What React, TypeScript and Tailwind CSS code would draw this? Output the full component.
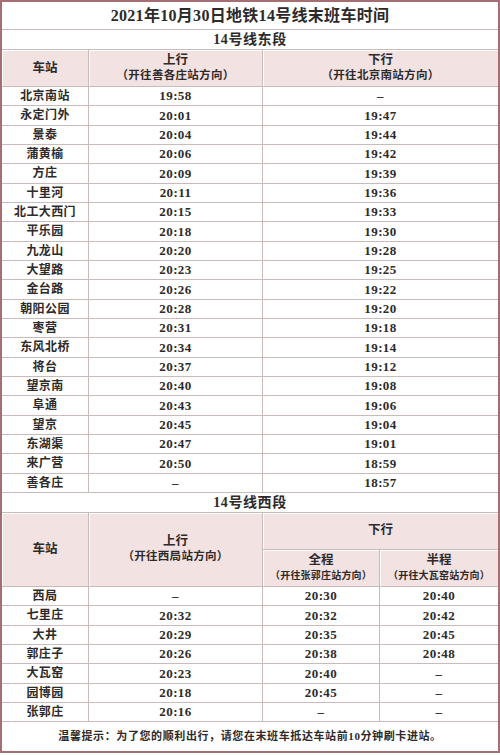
import React from "react";

const FONT = {
    fontFamily: '"Liberation Serif", "Noto Sans CJK SC", serif',
};

const EAST: [string, string, string][] = [
    ["北京南站", "19:58", "–"],
    ["永定门外", "20:01", "19:47"],
    ["景泰", "20:04", "19:44"],
    ["蒲黄榆", "20:06", "19:42"],
    ["方庄", "20:09", "19:39"],
    ["十里河", "20:11", "19:36"],
    ["北工大西门", "20:15", "19:33"],
    ["平乐园", "20:18", "19:30"],
    ["九龙山", "20:20", "19:28"],
    ["大望路", "20:23", "19:25"],
    ["金台路", "20:26", "19:22"],
    ["朝阳公园", "20:28", "19:20"],
    ["枣营", "20:31", "19:18"],
    ["东风北桥", "20:34", "19:14"],
    ["将台", "20:37", "19:12"],
    ["望京南", "20:40", "19:08"],
    ["阜通", "20:43", "19:06"],
    ["望京", "20:45", "19:04"],
    ["东湖渠", "20:47", "19:01"],
    ["来广营", "20:50", "18:59"],
    ["善各庄", "–", "18:57"],
];

const WEST: [string, string, string, string][] = [
    ["西局", "–", "20:30", "20:40"],
    ["七里庄", "20:32", "20:32", "20:42"],
    ["大井", "20:29", "20:35", "20:45"],
    ["郭庄子", "20:26", "20:38", "20:48"],
    ["大瓦窑", "20:23", "20:40", "–"],
    ["园博园", "20:18", "20:45", "–"],
    ["张郭庄", "20:16", "–", "–"],
];

const cell = "flex items-center justify-center border-r border-[#cbbaba]";
const time = "text-[13px] tracking-[0.4px]";
const head = "flex flex-col items-center justify-center bg-[#f3e2e2] shadow-[inset_1px_1px_0_#fff] leading-[15px]";

function Sub({ title, dir, small }: { title: string; dir: string; small?: boolean }) {
    return (
        <>
            <span className="text-[12.5px]">{title}</span>
            <span className={small ? "text-[10px] whitespace-nowrap tracking-[0.2px]" : "text-[11.5px] whitespace-nowrap tracking-[0.3px]"}>
                （{dir}）
            </span>
        </>
    );
}

export default function App() {
    return (
        <div className="w-[500px] h-[755px] bg-white text-[#2e2a2a] font-bold" style={FONT}>
            <div className="w-[500px] h-[753px] border-2 border-[#a66e70] flex flex-col">
                {/* Title */}
                <div className="h-[28px] border-b border-[#cbbaba] flex items-center justify-center text-[16px] tracking-[0.3px]">
                    2021年10月30日地铁14号线末班车时间
                </div>
                <div className="h-[20px] border-b border-[#cbbaba] flex items-center justify-center text-[14px] tracking-[0.6px]">
                    14号线东段
                </div>

                {/* East header */}
                <div className="h-[37px] border-b border-[#cbbaba] flex">
                    <div className={`${head} w-[87px] border-r border-[#cbbaba] text-[12.5px]`}>车站</div>
                    <div className={`${head} w-[174px] border-r border-[#cbbaba]`}>
                        <Sub title="上行" dir="开往善各庄站方向" />
                    </div>
                    <div className={`${head} flex-1`}>
                        <Sub title="下行" dir="开往北京南站方向" />
                    </div>
                </div>

                {EAST.map(([name, up, down]) => (
                    <div key={name} className="h-[19.33px] border-b border-[#cbbaba] flex text-[12px]">
                        <div className={`${cell} w-[87px] tracking-[0.4px]`}>{name}</div>
                        <div className={`${cell} w-[174px] ${time}`}>{up}</div>
                        <div className={`flex-1 flex items-center justify-center ${time}`}>{down}</div>
                    </div>
                ))}

                <div className="h-[20px] border-b border-[#cbbaba] flex items-center justify-center text-[14px] tracking-[0.6px]">
                    14号线西段
                </div>

                {/* West header */}
                <div className="h-[74px] border-b border-[#cbbaba] flex">
                    <div className={`${head} w-[87px] border-r border-[#cbbaba] text-[12.5px]`}>车站</div>
                    <div className={`${head} w-[174px] border-r border-[#cbbaba]`}>
                        <Sub title="上行" dir="开往西局站方向" />
                    </div>
                    <div className="flex-1 flex flex-col">
                        <div className={`${head} h-[37px] border-b border-[#cbbaba] text-[12.5px]`}>下行</div>
                        <div className="flex flex-1">
                            <div className={`${head} w-[117px] border-r border-[#cbbaba]`}>
                                <Sub title="全程" dir="开往张郭庄站方向" small />
                            </div>
                            <div className={`${head} flex-1`}>
                                <Sub title="半程" dir="开往大瓦窑站方向" small />
                            </div>
                        </div>
                    </div>
                </div>

                {WEST.map(([name, up, full, half]) => (
                    <div key={name} className="h-[19.33px] border-b border-[#cbbaba] flex text-[12px]">
                        <div className={`${cell} w-[87px] tracking-[0.4px]`}>{name}</div>
                        <div className={`${cell} w-[174px] ${time}`}>{up}</div>
                        <div className={`${cell} w-[117px] ${time}`}>{full}</div>
                        <div className={`flex-1 flex items-center justify-center ${time}`}>{half}</div>
                    </div>
                ))}

                {/* Footer note */}
                <div className="flex-1 flex items-center justify-center text-[11px] tracking-[0.6px] font-semibold">
                    温馨提示：为了您的顺利出行，请您在末班车抵达车站前10分钟刷卡进站。
                </div>
            </div>
        </div>
    );
}
